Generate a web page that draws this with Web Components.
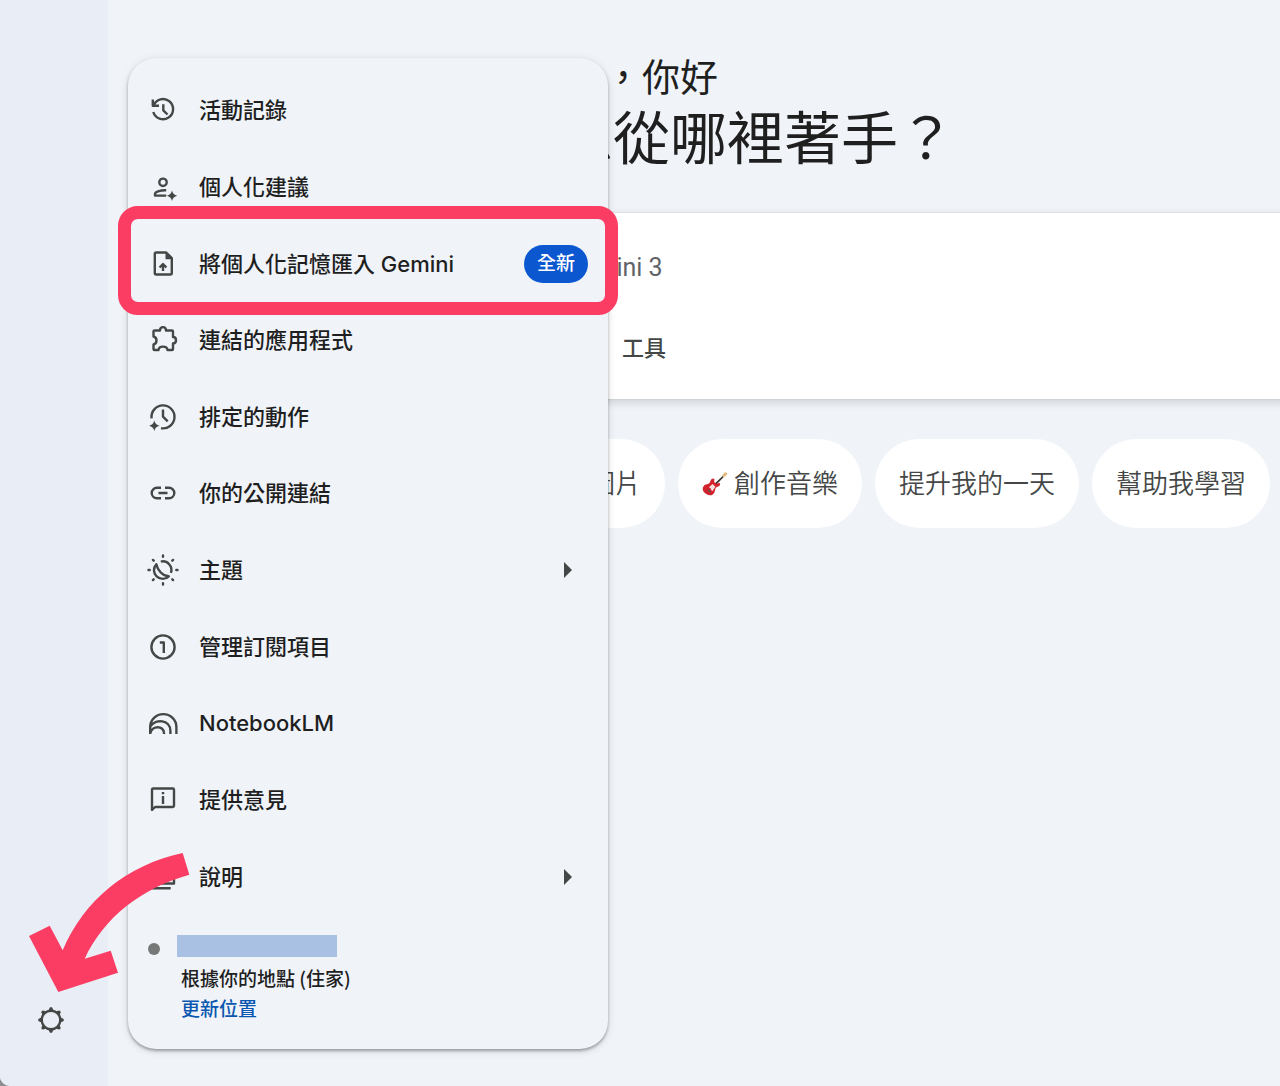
<!DOCTYPE html>
<html lang="zh-Hant">
<head>
<meta charset="utf-8">
<meta name="viewport" content="width=device-width, initial-scale=1">
<title>Gemini</title>
<style>
  html {
    background: #8b8d90;
  }
  body {
    margin: 0;
    font-family: Inter, "Noto Sans CJK TC", sans-serif;
    color: #1f1f1f;
  }
</style>
</head>
<body>
<gemini-app>
  <app-sidebar slot="sidebar"></app-sidebar>

  <welcome-header>
    <span slot="greeting">，你好</span>
    你想從哪裡著手？
  </welcome-header>
  <prompt-composer placeholder="問問 Gemini 3"></prompt-composer>
  <chip-row>
    <suggestion-chip icon="picture">建立圖片</suggestion-chip>
    <suggestion-chip icon="guitar">創作音樂</suggestion-chip>
    <suggestion-chip>提升我的一天</suggestion-chip>
    <suggestion-chip>幫助我學習</suggestion-chip>
  </chip-row>

  <settings-menu slot="overlay">
    <menu-item icon="history">活動記錄</menu-item>
    <menu-item icon="person">個人化建議</menu-item>
    <menu-item icon="upload">將個人化記憶匯入 Gemini<new-badge slot="end">全新</new-badge></menu-item>
    <menu-item icon="puzzle">連結的應用程式</menu-item>
    <menu-item icon="schedule">排定的動作</menu-item>
    <menu-item icon="link">你的公開連結</menu-item>
    <menu-item icon="theme" submenu>主題</menu-item>
    <menu-item icon="one">管理訂閱項目</menu-item>
    <menu-item icon="notebook">NotebookLM</menu-item>
    <menu-item icon="feedback">提供意見</menu-item>
    <menu-item icon="help" submenu>說明</menu-item>
    <location-info slot="footer">
      根據你的地點 (住家)
      <span slot="action">更新位置</span>
    </location-info>
  </settings-menu>

  <page-marks slot="overlay"></page-marks>
</gemini-app>

<script>
// All icons share a 32 x 32 box
const icons = {
  history: '<path d="M5.8 5.5v6.3h6.2M6.6 11.4A10.1 10.1 0 1 1 6.3 18M16.3 10.3v6l4.2 4.2"/>',
  person: '<circle cx="16" cy="11.3" r="3.7"/><path d="M19.2 24.6H8v-1.4q0-1.8 3-2.8 4-1.3 8.2-1.1"/><path class="fill" d="M25 19.4q1 4.2 5.2 5.3-4.2 1-5.2 5.3-1-4.3-5.2-5.3 4.2-1.1 5.2-5.3z"/>',
  upload: '<path d="M9.2 4.5h10l5.6 5.6v15q0 1.4-1.4 1.4H9.2q-1.4 0-1.4-1.4V5.9q0-1.4 1.4-1.4z"/><path class="fill" d="M18.5 4.5v6.8h6.5z"/><path d="M16 23v-6.5M12.6 19.5l3.4-3.4 3.4 3.4"/>',
  puzzle: '<path d="M8 6.5h5C13 2 19 2 19 6.5h6q1 0 1 1V13c4 0 4 6.5 0 6.5V25q0 1-1 1h-4.5c-.5-4.5-8.5-4.5-9 0H7.5q-1 0-1-1v-4.5c4-1 4-7 0-8V7.5q0-1 1.5-1z"/>',
  schedule: '<path d="M4.6 17.3A11.5 11.5 0 1 1 14 27.2M16 8.5v7.2l4.7 4.7"/><path class="fill" d="M7.3 19.5q1 4.2 5.2 5.2-4.2 1-5.2 5.3-1-4.3-5.2-5.3 4.2-1 5.2-5.2z"/>',
  link: '<path d="M14 10.8H9.9a5.2 5.2 0 0 0 0 10.4H14M18 10.8h4.1a5.2 5.2 0 0 1 0 10.4H18M11.5 16h9"/>',
  theme: '<path d="M9.3 10.2A8.7 8.7 0 0 0 21.8 22.3Q17 22 13.5 18.2 10.2 14.5 9.3 10.2zM13.8 7.6A8.6 8.6 0 0 1 23.9 18.8"/><path stroke-linecap="round" d="M16 1.5v1.2M16 29.3v1.2M1.5 16h1.2M29.3 16h1.2M5.9 5.9l.8.8M25.3 25.3l.8.8M26.1 5.9l-.8.8M6.7 25.3l-.8.8"/>',
  one: '<circle cx="16" cy="16" r="11.6"/><path d="M12.8 11.5h4V22"/>',
  notebook: '<path d="M3.2 27v-6.8a13.1 13.1 0 0 1 26.2 0V27M3.2 19.5C8.5 11.5 23.4 12.5 23.4 24v3M3.2 26.5C5 18 17 18.5 17 26v1"/>',
  feedback: '<path d="M5 26V5.7q0-1.2 1.2-1.2h19.6q1.2 0 1.2 1.2v16.1q0 1.2-1.2 1.2H8z"/><path d="M16 12v8M16 8v2.3"/>',
  help: '<path d="M9.5 4.5h16q1.5 0 1.5 1.5v16.5h-19V6q0-1.5 1.5-1.5zM4.5 9v18.3h19.2"/>',
  picture: '<path d="M5 6h22v20H5zM5 22l7-7 5 5 4-4 6 6"/>',
  tune: '<path d="M4 9h12M22 9h6M19 5v8M4 23h6M16 23h12M13 19v8"/>',
  plus: '<path d="M16 6v20M6 16h20"/>',
  caret: '<path class="fill" d="M12 8l8 8-8 8z"/>',
  gear: '<circle cx="16" cy="16" r="9.3"/>' + [0, 45, 90, 135, 180, 225, 270, 315]
    .map((a) => `<path class="fill" d="M13.4 6.5L14.7 3.7q1.3-1.4 2.6 0L18.6 6.5z" transform="rotate(${a} 16 16)"/>`).join(''),
  guitar: `<g stroke="none">
    <path fill="#3c3432" d="M16 15L26 5.5l1.4 1.4L17.5 17z"/>
    <path fill="#e3bb82" d="M24.5 5.8l3.3-3.9q1-.8 2 0l1.2 1q.7 1-.3 1.8l-4.2 3.3z"/>
    <path fill="#d3222c" d="M1 20.5q1.5-4 6-4.5 2.5-.3 3-2.7.5-3.5 3.5-4 2.5 0 1.5 3-.3 1.7 1.3 2.5 2 1.6 3.5.4 2.2-1 2.6.8-.2 3-3.5 3.5-2.7.6-2.7 3.4-.4 5-4.4 6.8-4 1-7.5-2-4-3-3.3-7.2z"/>
    <path fill="#f6dfdc" d="M8.5 20l4.5-4 3.5 3.5-3.5 5q-1.8-.2-2-2.4-.4-1.5-2.5-2.1z"/>
    <path fill="#5f5452" d="M6.5 23.5l1.3-1.3 3.2 3.2-1.3 1.3z"/></g>`
};

class BaseElement extends HTMLElement {
  constructor() {
    super();
    this.attachShadow({ mode: 'open' });
  }

  connectedCallback() {
    const template = document.createElement('template');
    template.innerHTML = this.render();
    this.shadowRoot.replaceChildren(template.content.cloneNode(true));
  }
}

class AppIcon extends BaseElement {
  render() {
    return `
      <style>
        :host {
          display: block;
          flex: none;
          width: 32px;
          height: 32px;
        }
        svg {
          display: block;
          width: 100%;
          height: 100%;
          overflow: visible;
          fill: none;
          stroke: currentColor;
          stroke-width: 2.4;
          stroke-linejoin: round;
        }
        .fill {
          fill: currentColor;
          stroke: none;
        }
      </style>
      <svg viewBox="0 0 32 32" aria-hidden="true">${icons[this.getAttribute('name')]}</svg>
    `;
  }
}

class GeminiApp extends BaseElement {
  render() {
    return `
      <style>
        :host {
          position: relative;
          display: flex;
          min-height: 100vh;
          overflow: hidden;
          background: #f0f4f9;
          border-bottom-left-radius: 10px;
        }
        main {
          flex: 1;
          min-width: 0;
          padding: 49px 0 40px 373px;
        }
      </style>
      <slot name="sidebar"></slot>
      <main><slot></slot></main>
      <slot name="overlay"></slot>
    `;
  }
}

class AppSidebar extends BaseElement {
  render() {
    return `
      <style>
        :host {
          display: flex;
          flex: none;
          flex-direction: column;
          justify-content: flex-end;
          box-sizing: border-box;
          width: 108px;
          padding: 0 0 50px 35px;
          background: #e9eef6;
        }
        button {
          width: 32px;
          padding: 0;
          border: 0;
          background: none;
          color: #444746;
          cursor: pointer;
        }
      </style>
      <button type="button" aria-label="設定"><app-icon name="gear"></app-icon></button>
    `;
  }
}

class WelcomeHeader extends BaseElement {
  render() {
    return `
      <style>
        :host {
          display: block;
          padding-left: 18px;
          margin-bottom: 40px;
          white-space: nowrap;
        }
        p, h1 {
          margin: 0;
          font-weight: 400;
        }
        p {
          padding-left: 105px;
          font-size: 38px;
          line-height: 56px;
        }
        h1 {
          font-size: 57px;
          line-height: 68px;
        }
      </style>
      <p><slot name="greeting"></slot></p>
      <h1><slot></slot></h1>
    `;
  }
}

class PromptComposer extends BaseElement {
  render() {
    return `
      <style>
        :host {
          display: flex;
          flex-direction: column;
          justify-content: space-between;
          box-sizing: border-box;
          height: 186px;
          margin-right: -60px;
          padding: 34px 27px 33px;
          border-radius: 48px;
          background: #fff;
          box-shadow: 0 3px 10px rgba(60, 64, 67, .2), 0 0 2px rgba(60, 64, 67, .2);
        }
        input {
          width: 100%;
          height: 40px;
          padding: 0;
          border: 0;
          outline: 0;
          background: none;
          font: 400 25px Roboto, "Noto Sans CJK TC", sans-serif;
        }
        input::placeholder {
          color: #5f6368;
          opacity: 1;
        }
        .tools {
          display: flex;
          align-items: center;
          gap: 38px;
        }
        button {
          display: flex;
          align-items: center;
          gap: 12px;
          padding: 0;
          border: 0;
          background: none;
          color: #444746;
          font: 500 22px/40px "Noto Sans CJK TC", sans-serif;
          cursor: pointer;
        }
      </style>
      <input type="text" aria-label="提示" placeholder="${this.getAttribute('placeholder')}">
      <div class="tools">
        <button type="button" aria-label="新增檔案"><app-icon name="plus"></app-icon></button>
        <button type="button"><app-icon name="tune"></app-icon>工具</button>
      </div>
    `;
  }
}

class ChipRow extends BaseElement {
  render() {
    return `
      <style>
        :host {
          display: flex;
          gap: 13px;
          margin-top: 40px;
        }
      </style>
      <slot></slot>
    `;
  }
}

class SuggestionChip extends BaseElement {
  render() {
    const icon = this.getAttribute('icon');
    return `
      <style>
        :host {
          display: block;
          flex: none;
        }
        button {
          display: flex;
          align-items: center;
          gap: 6px;
          padding: 24px;
          border: 0;
          border-radius: 45px;
          background: #fff;
          color: #444746;
          font: 350 26px/41px Inter, "Noto Sans CJK TC", sans-serif;
          white-space: nowrap;
          cursor: pointer;
        }
        app-icon {
          width: 26px;
          height: 26px;
        }
      </style>
      <button type="button">${icon ? `<app-icon name="${icon}"></app-icon>` : ''}<slot></slot></button>
    `;
  }
}

class SettingsMenu extends BaseElement {
  render() {
    return `
      <style>
        /* opens beside the sidebar, over the page */
        :host {
          position: absolute;
          top: 58px;
          bottom: 37px;
          left: 128px;
          z-index: 1;
          display: flex;
          flex-direction: column;
          box-sizing: border-box;
          width: 480px;
          padding-top: 14px;
          border-radius: 28px;
          background: #f0f4f9;
          box-shadow: 0 2px 3px rgba(0, 0, 0, .3), 0 2px 8px rgba(0, 0, 0, .12);
        }
        nav {
          display: grid;
          flex: 1;
          grid-auto-rows: 1fr;
        }
      </style>
      <nav aria-label="設定"><slot></slot></nav>
      <slot name="footer"></slot>
    `;
  }
}

class MenuItem extends BaseElement {
  render() {
    return `
      <style>
        :host {
          display: flex;
        }
        button {
          display: flex;
          flex: 1;
          align-items: center;
          gap: 20px;
          padding: 0 20px 0 19px;
          border: 0;
          background: none;
          color: #1f1f1f;
          font: 500 22px/32px Inter, "Noto Sans CJK TC", sans-serif;
          text-align: left;
          cursor: pointer;
        }
        button:hover {
          background: rgba(31, 31, 31, .06);
        }
        app-icon {
          color: #444746;
        }
        .label {
          flex: 1;
          white-space: nowrap;
        }
        .caret {
          width: 40px;
        }
      </style>
      <button type="button">
        <app-icon name="${this.getAttribute('icon')}"></app-icon>
        <span class="label"><slot></slot></span>
        <slot name="end"></slot>
        ${this.hasAttribute('submenu') ? '<app-icon class="caret" name="caret"></app-icon>' : ''}
      </button>
    `;
  }
}

class NewBadge extends BaseElement {
  render() {
    return `
      <style>
        :host {
          display: block;
          padding: 0 13px;
          border-radius: 19px;
          background: #0b57d0;
          color: #fff;
          font-size: 19px;
          line-height: 38px;
        }
      </style>
      <slot></slot>
    `;
  }
}

class LocationInfo extends BaseElement {
  render() {
    return `
      <style>
        :host {
          display: flex;
          gap: 17px;
          padding: 20px 20px 26px;
          font: 500 19px/30px "Noto Sans CJK TC", sans-serif;
        }
        .dot {
          flex: none;
          width: 12px;
          height: 12px;
          margin-top: 8px;
          border-radius: 50%;
          background: #757877;
        }
        .place {
          width: 160px;
          height: 22px;
          margin-bottom: 6px;
          background: #a9c2e4;
        }
        .text {
          padding-left: 4px;
        }
        a {
          display: block;
          color: #0b57b0;
          text-decoration: none;
        }
      </style>
      <div class="dot"></div>
      <div>
        <div class="place"></div>
        <div class="text">
          <slot></slot>
          <a href="#location"><slot name="action"></slot></a>
        </div>
      </div>
    `;
  }
}

class PageMarks extends BaseElement {
  render() {
    return `
      <style>
        :host {
          position: absolute;
          inset: 0;
          z-index: 2;
          color: #fb3d64;
          pointer-events: none;
        }
        .frame {
          position: absolute;
          top: 206px;
          left: 118px;
          box-sizing: border-box;
          width: 500px;
          height: 109px;
          border: 13px solid currentColor;
          border-radius: 20px;
        }
        svg {
          position: absolute;
          bottom: 86px;
          left: 20px;
          width: 180px;
          height: 150px;
          fill: currentColor;
        }
      </style>
      <div class="frame"></div>
      <svg viewBox="20 850 180 150" aria-hidden="true">
        <path d="M182.7 853L189.3 874.7C142 888 104 917 84.7 958.7L110.7 950.7 118 972.7 58.3 992 29 936 49.7 925.7 62.7 950.3C84 900 127 865 182.7 853z"/>
      </svg>
    `;
  }
}

customElements.define('app-icon', AppIcon);
customElements.define('gemini-app', GeminiApp);
customElements.define('app-sidebar', AppSidebar);
customElements.define('welcome-header', WelcomeHeader);
customElements.define('prompt-composer', PromptComposer);
customElements.define('chip-row', ChipRow);
customElements.define('suggestion-chip', SuggestionChip);
customElements.define('settings-menu', SettingsMenu);
customElements.define('menu-item', MenuItem);
customElements.define('new-badge', NewBadge);
customElements.define('location-info', LocationInfo);
customElements.define('page-marks', PageMarks);
</script>
</body>
</html>
